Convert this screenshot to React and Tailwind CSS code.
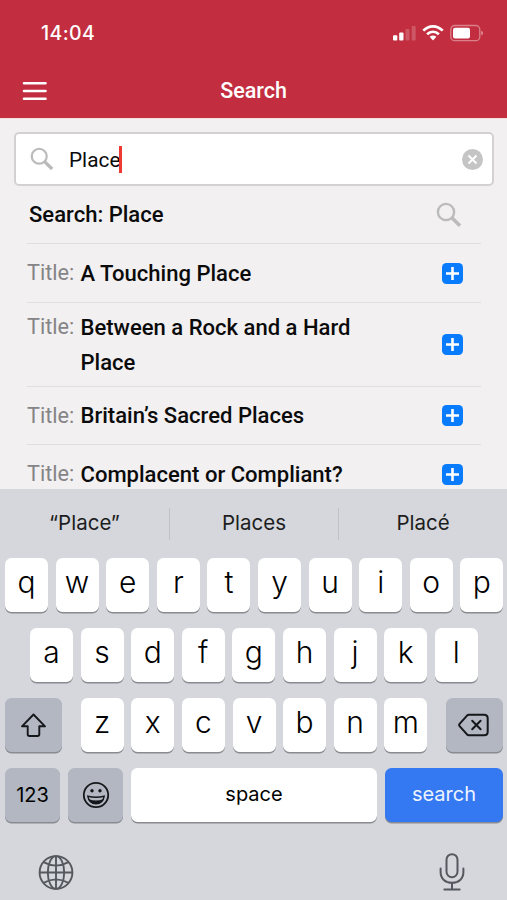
const cap = "rounded-[6.5px] shadow-[0_1.5px_0_#898b90] flex items-center justify-center h-[54px]";

function Magnifier({ size }) {
  return (
    <svg width={size} height={size} viewBox="0 0 26 26" fill="none" stroke="#bcbbbb" className="shrink-0">
      <circle cx="10" cy="10" r="8.1" strokeWidth="2.4" />
      <path d="M15.8 15.8L24 23.8" strokeWidth="3.6" />
    </svg>
  );
}

function Plus() {
  return (
    <span className="flex h-[21px] w-[21px] shrink-0 items-center justify-center rounded-[4.5px] bg-[#087cfd]">
      <svg width="21" height="21" viewBox="0 0 21 21" stroke="#fff" strokeWidth="2.6" fill="none">
        <path d="M10.5 4V17M4 10.5H17" />
      </svg>
    </span>
  );
}

function Row({ children, className }) {
  return (
    <li className={`flex items-center border-b-[1.5px] border-[#e0dfe0] pr-[18px] ${className}`}>
      <span className="w-[53.5px] shrink-0 self-start text-[21.7px] text-[#858486]">Title:</span>
      <span className="w-[290px] font-medium">{children}</span>
      <span className="ml-auto"><Plus /></span>
    </li>
  );
}

function Letter({ c }) {
  return <button className={`${cap} w-[43px] shrink-0 bg-white pb-[6px] text-[30px] font-[350] leading-none`}>{c}</button>;
}

function Letters({ keys }) {
  return (
    <div className="flex gap-[7.6px]">
      {keys.split("").map((c) => <Letter key={c} c={c} />)}
    </div>
  );
}

export default function App() {
  return (
    <div className="flex h-[900px] w-[507px] flex-col overflow-hidden bg-[#f2f0f1] font-['Roboto',sans-serif] text-[21.5px] text-[#0b0b0c]">
      <header className="h-[119px] shrink-0 border-b border-[#f4dfe2] bg-[#c22e3f] text-white">
        <div className="flex h-[64px] items-center justify-between pl-[41px] pr-[24px] pt-[2px]">
          <span className="pt-[2px] font-['Inter',sans-serif] text-[19.5px] font-medium tracking-[0.4px]">14:04</span>
          <svg width="91" height="18" viewBox="392 24 91 18" fill="#fff">
            <rect x="393" y="35.3" width="4.3" height="5.2" rx="1" />
            <rect x="399.2" y="32.4" width="4.3" height="8.1" rx="1" />
            <rect x="405.5" y="29" width="4" height="11.5" rx="1" opacity=".2" />
            <rect x="411.7" y="26" width="4" height="14.5" rx="1" opacity=".2" />
            <g fill="none" stroke="#fff" strokeWidth="2.7">
              <path d="M423.3 30.6C429 24.9 437 24.9 442.7 30.6" />
              <path d="M427.1 34.3C430.6 31 435.4 31 438.9 34.3" />
            </g>
            <path d="M429.6 36.7Q433 34.1 436.4 36.7L433 40.6Z" />
            <rect x="450.8" y="25.5" width="29" height="15.2" rx="4" fill="none" stroke="#fff" strokeOpacity=".4" strokeWidth="1.3" />
            <rect x="453" y="27.7" width="17" height="10.8" rx="2" />
            <path d="M481.3 30.8Q483 31 483 33Q483 35 481.3 35.4Z" opacity=".5" />
          </svg>
        </div>
        <div className="grid h-[54px] grid-cols-3 items-center px-[22px]">
          <svg width="25" height="20" viewBox="0 0 25 20" stroke="#fff" strokeWidth="2.6" strokeLinecap="round">
            <path d="M2 2.2H23.5M2 10H23.5M2 17.8H23.5" />
          </svg>
          <h1 className="text-center font-medium">Search</h1>
        </div>
      </header>

      <main className="h-[370px] shrink-0 overflow-hidden pt-[13px]">
        <div className="ml-[14px] mr-[13px] flex h-[54px] items-center rounded-[5px] border-2 border-[#d3d1d2] bg-white pl-[14px] pr-[9px]">
          <Magnifier size={24} />
          <span className="ml-[15px] pt-[3px] text-[20.8px]">Place</span>
          <span className="-ml-[1px] mt-[1px] h-[27px] w-[2.5px] bg-[#ef3a32]" />
          <span className="ml-auto flex h-[21px] w-[21px] items-center justify-center rounded-full bg-[#c6c5c6]">
            <svg width="11" height="11" viewBox="0 0 11 11" stroke="#fff" strokeWidth="2"><path d="M1.5 1.5L9.5 9.5M9.5 1.5L1.5 9.5" /></svg>
          </span>
        </div>
        <ul className="ml-[27px] mr-[26px] text-[22.05px] leading-[35px]">
          <li className="flex h-[58px] items-center justify-between border-b-[1.5px] border-[#e0dfe0] pl-[2px] pr-[19px] font-medium">
            Search: Place
            <Magnifier size={26} />
          </li>
          <Row className="h-[59px] py-[11px]">A Touching Place</Row>
          <Row className="h-[84px] py-[6px]">Between a Rock and a Hard Place</Row>
          <Row className="h-[58px] py-[11px]">Britain’s Sacred Places</Row>
          <Row className="h-[59px] py-[11px]">Complacent or Compliant?</Row>
        </ul>
      </main>

      <section className="flex grow flex-col bg-[#d5d7dc] font-['Inter',sans-serif] text-black">
        <div className="flex h-[69px] items-center text-[20.5px] text-[#1c1d20]">
          <span className="w-[169px] pb-[1px] text-center">“Place”</span>
          <span className="h-8 w-px bg-[#bfc1c7]" />
          <span className="w-[168px] pb-[1px] text-center">Places</span>
          <span className="h-8 w-px bg-[#bfc1c7]" />
          <span className="w-[168px] pb-[1px] text-center">Placé</span>
        </div>
        <div className="flex flex-col gap-4 pl-[5px] pr-[4px]">
          <div className="flex"><Letters keys="qwertyuiop" /></div>
          <div className="flex pl-[25px]"><Letters keys="asdfghjkl" /></div>
          <div className="flex justify-between">
            <button className={`${cap} w-[57px] bg-[#b2b7c1]`}>
              <svg width="27" height="25" viewBox="0 0 27 25" fill="none" stroke="#15171b" strokeWidth="1.9" strokeLinejoin="round">
                <path d="M13.5 1.5L25 13.3H19.3V21.3Q19.3 23 17.6 23H9.4Q7.7 23 7.7 21.3V13.3H2Z" />
              </svg>
            </button>
            <Letters keys="zxcvbnm" />
            <button className={`${cap} w-[57px] bg-[#b2b7c1]`}>
              <svg width="31" height="24" viewBox="0 0 31 24" fill="none" stroke="#15171b" strokeWidth="2" strokeLinejoin="round" strokeLinecap="round" className="-translate-x-px">
                <path d="M11 1.8H26Q29.7 1.8 29.7 5.3V18.7Q29.7 22.2 26 22.2H11Q9.8 22.2 8.8 21.2L1.6 13.2Q.7 12 1.6 10.8L8.8 2.8Q9.8 1.8 11 1.8Z" />
                <path d="M14.2 7.8L22.6 16.2M22.6 7.8L14.2 16.2" />
              </svg>
            </button>
          </div>
          <div className="flex gap-[8px] text-[20px]">
            <button className={`${cap} w-[55px] bg-[#b2b7c1]`}>123</button>
            <button className={`${cap} w-[55px] bg-[#b2b7c1]`}>
              <svg width="28" height="28" viewBox="0 0 28 28" fill="none" stroke="#15171b" strokeWidth="1.8">
                <circle cx="14" cy="14" r="12.2" />
                <circle cx="10" cy="9.8" r="1.7" fill="#15171b" stroke="none" />
                <circle cx="18" cy="9.8" r="1.7" fill="#15171b" stroke="none" />
                <path d="M5.8 15.2Q14 17.3 22.2 15.2Q21 22.8 14 22.8Q7 22.8 5.8 15.2Z" strokeWidth="1.4" />
                <path d="M6.6 18Q14 21 21.4 18Q19.5 22.8 14 22.8Q8.5 22.8 6.6 18Z" fill="#15171b" stroke="none" />
              </svg>
            </button>
            <button className={`${cap} w-[246px] bg-white pb-[3px]`}>space</button>
            <button className={`${cap} grow bg-[#3478f2] pb-[3px] text-[#eef4ff]`}>search</button>
          </div>
        </div>
        <div className="flex justify-between pl-[38px] pr-[41px] pt-[31px]">
          <svg width="36" height="38" viewBox="0 0 36 38" fill="none" stroke="#55595f" strokeWidth="1.9">
            <circle cx="18" cy="19.5" r="16.4" />
            <ellipse cx="18" cy="19.5" rx="8.2" ry="16.4" />
            <path d="M18 3V36M1.6 19.5H34.4M5.5 9.2Q18 16 30.5 9.2M5.5 29.8Q18 23 30.5 29.8" />
          </svg>
          <svg width="28" height="40" viewBox="0 0 28 40" fill="none" stroke="#55595f" strokeWidth="2" strokeLinecap="round">
            <rect x="8.5" y="1.2" width="11" height="23" rx="5.5" />
            <path d="M2.6 15.5V19C2.6 25.7 7.4 29.8 14 29.8S25.4 25.7 25.4 19V15.5M14 29.8V36.3M6.3 36.5H21.7" />
          </svg>
        </div>
      </section>
    </div>
  );
}
